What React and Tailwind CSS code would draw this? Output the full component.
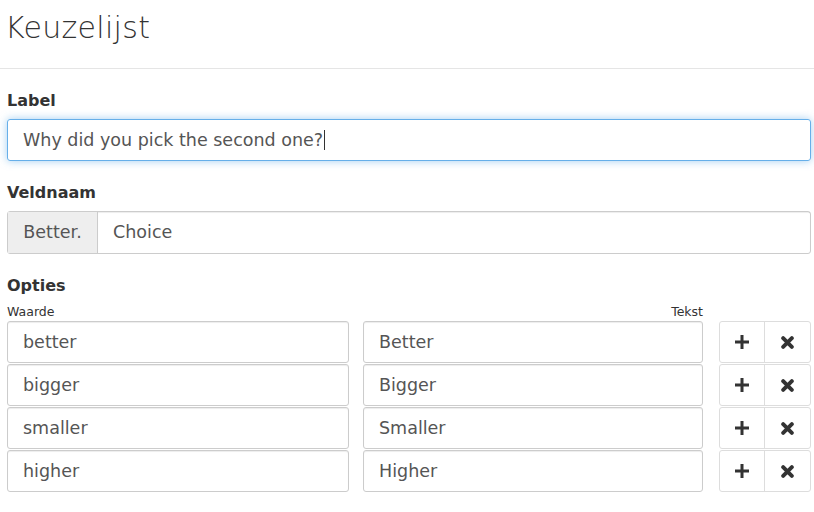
import React from 'react';

const font = { fontFamily: '"DejaVu Sans", "Liberation Sans", sans-serif' };

const options = [
  { value: 'better', text: 'Better' },
  { value: 'bigger', text: 'Bigger' },
  { value: 'smaller', text: 'Smaller' },
  { value: 'higher', text: 'Higher' },
];

function PlusIcon() {
  return (
    <svg width="14" height="14" viewBox="0 0 14 14">
      <path d="M5.5 0h3v5.5H14v3H8.5V14h-3V8.5H0v-3h5.5z" fill="#333" />
    </svg>
  );
}

function TimesIcon() {
  return (
    <svg width="13" height="13" viewBox="0 0 12 12">
      <path d="M2 2l8 8M10 2l-8 8" stroke="#333" strokeWidth="3.6" strokeLinecap="round" />
    </svg>
  );
}

function App() {
  return (
    <div className="w-[814px] h-[512px] bg-white text-[#333] overflow-hidden" style={font}>
      <h1 className="font-light text-[30px] leading-none pl-[5px] pt-[13px] pb-[25px] border-b border-[#e5e5e5] tracking-[0.3px]">
        Keuzelijst
      </h1>

      <div className="pl-[7px] pr-[3px]">
        <div className="mt-[22px] text-[16px] font-bold leading-[20px]">Label</div>
        <div className="mt-[8px] h-[42px] border border-[#66afe9] rounded-[3px] shadow-[0_0_8px_rgba(102,175,233,0.6)] flex items-center px-[15px] text-[17.5px] text-[#555]">
          Why did you pick the second one?<span className="w-px h-[20px] bg-[#333] ml-[1px]" />
        </div>

        <div className="mt-[22px] text-[16px] font-bold leading-[20px]">Veldnaam</div>
        <div className="mt-[8px] h-[43px] flex border border-[#ccc] rounded-[3px] text-[17.5px] text-[#555]">
          <div className="w-[90px] bg-[#eee] border-r border-[#ccc] flex items-center justify-center">Better.</div>
          <div className="flex-1 flex items-center px-[15px] shadow-[inset_0_1px_1px_rgba(0,0,0,0.075)]">Choice</div>
        </div>

        <div className="mt-[22px] text-[16px] font-bold leading-[20px]">Opties</div>
        <div className="mt-[9px] flex text-[12.5px] leading-[13px]">
          <div className="w-[342px]">Waarde</div>
          <div className="ml-[14px] w-[340px] text-right">Tekst</div>
        </div>
        <div className="mt-[3px] flex flex-col gap-px">
          {options.map((o) => (
            <div key={o.value} className="flex h-[42px] text-[17.5px] text-[#555]">
              <div className="w-[342px] shrink-0 border border-[#ccc] rounded-[3px] flex items-center px-[15px] shadow-[inset_0_1px_1px_rgba(0,0,0,0.075)]">
                {o.value}
              </div>
              <div className="ml-[14px] w-[340px] shrink-0 border border-[#ccc] rounded-[3px] flex items-center px-[15px] shadow-[inset_0_1px_1px_rgba(0,0,0,0.075)]">
                {o.text}
              </div>
              <div className="ml-[16px] w-[92px] shrink-0 flex border border-[#ddd] rounded-[3px]">
                <div className="w-[45px] border-r border-[#ddd] flex items-center justify-center">
                  <PlusIcon />
                </div>
                <div className="flex-1 flex items-center justify-center">
                  <TimesIcon />
                </div>
              </div>
            </div>
          ))}
        </div>
      </div>
    </div>
  );
}

export default App;
